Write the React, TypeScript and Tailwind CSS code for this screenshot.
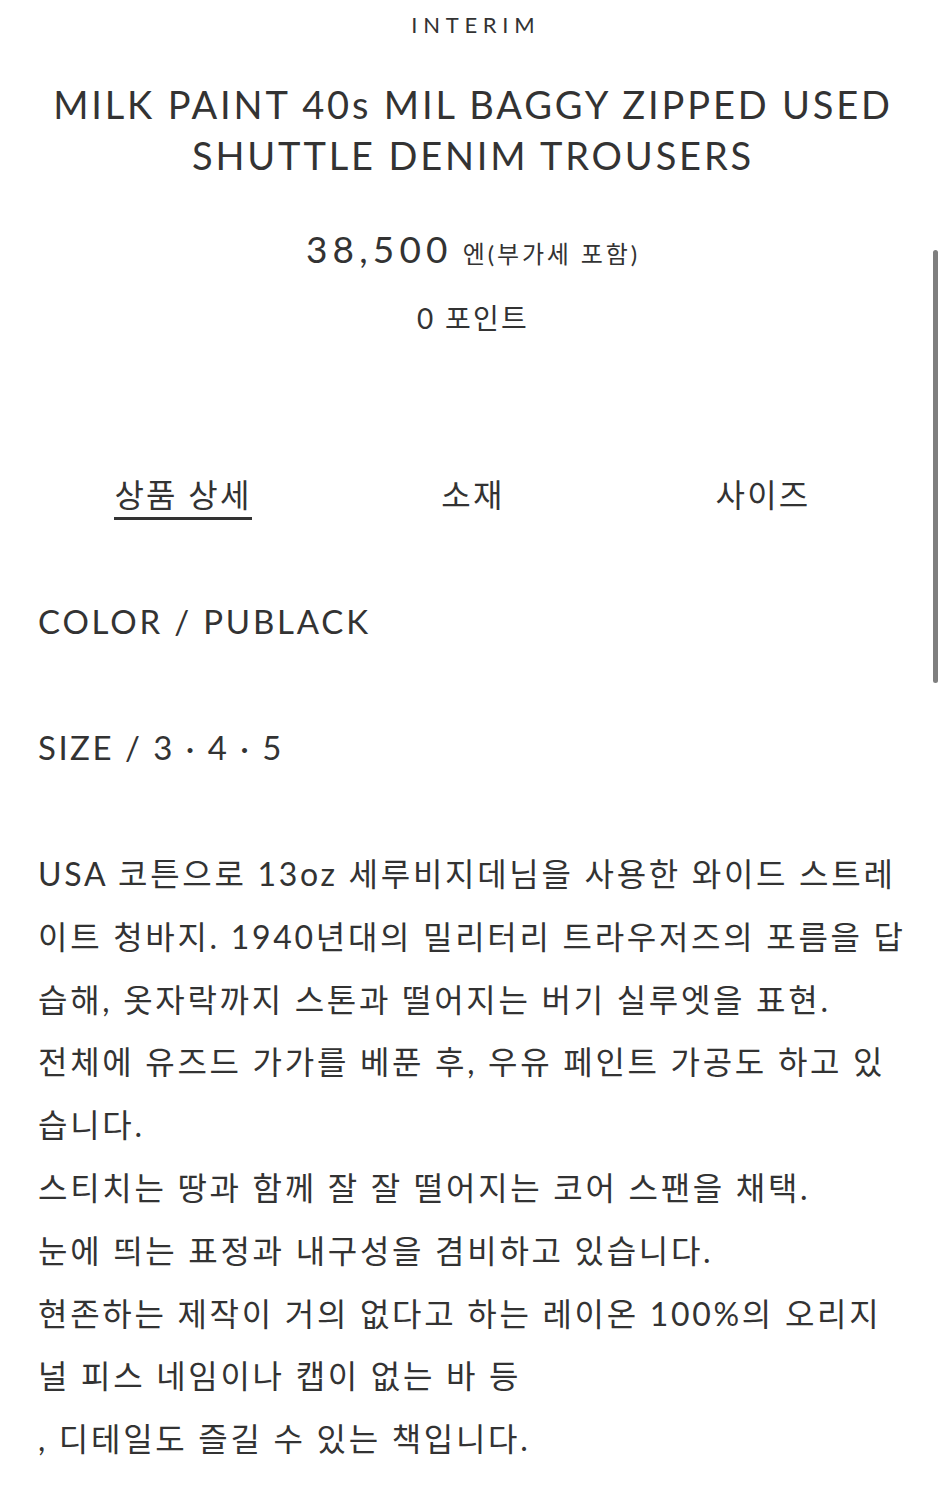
import React from 'react';

const body = [
  'USA 코튼으로 13oz 세루비지데님을 사용한 와이드 스트레',
  '이트 청바지. 1940년대의 밀리터리 트라우저즈의 포름을 답',
  '습해, 옷자락까지 스톤과 떨어지는 버기 실루엣을 표현.',
  '전체에 유즈드 가가를 베푼 후, 우유 페인트 가공도 하고 있',
  '습니다.',
  '스티치는 땅과 함께 잘 잘 떨어지는 코어 스팬을 채택.',
  '눈에 띄는 표정과 내구성을 겸비하고 있습니다.',
  '현존하는 제작이 거의 없다고 하는 레이온 100%의 오리지',
  '널 피스 네임이나 캡이 없는 바 등',
  ', 디테일도 즐길 수 있는 책입니다.',
];

export default function App() {
  return (
    <div
      className="relative min-h-[1500px] bg-white text-[#333] overflow-hidden"
      style={{ fontFamily: "Lato, 'Noto Sans CJK KR', sans-serif" }}
    >
      {/* scroll indicator */}
      <div className="absolute right-[8px] top-[250px] h-[433px] w-[5px] rounded-full bg-[#7f7f7f]" />

      <div className="px-[38px]">
        <div className="pt-[10px] text-center text-[22px] leading-[30px] tracking-[0.26em] pl-[0.26em]">INTERIM</div>

        <h1 className="mt-[39px] text-center text-[38px] leading-[51px] font-normal tracking-[0.075em]">
          MILK PAINT 40s MIL BAGGY ZIPPED USED
          <br />
          SHUTTLE DENIM TROUSERS
        </h1>

        <div className="mt-[45px] flex items-baseline justify-center">
          <span className="text-[37px] leading-[46px] tracking-[0.14em]">38,500</span>
          <span className="ml-[10px] text-[24px] tracking-[0.12em]">엔(부가세 포함)</span>
        </div>
        <div className="mt-[29px] text-center text-[28px] leading-[34px] tracking-[0.08em]">0 포인트</div>

        <div className="mt-[140px] grid grid-cols-3 text-center text-[32px] leading-[40px] tracking-[0.07em]">
          <div>
            <span className="border-b-[3px] border-[#333] pb-[3px]">상품 상세</span>
          </div>
          <div>소재</div>
          <div>사이즈</div>
        </div>

        <div className="mt-[84px] text-[33px] leading-[44px] tracking-[0.085em]">COLOR / PUBLACK</div>
        <div className="mt-[82px] text-[33px] leading-[44px] tracking-[0.075em]">SIZE / 3 · 4 · 5</div>

        <div className="mt-[74px] text-[32px] leading-[62.8px] tracking-[2.7px]">
          {body.map((line, i) => (
            <div key={i} className="whitespace-nowrap">
              {line}
            </div>
          ))}
        </div>
      </div>
    </div>
  );
}
